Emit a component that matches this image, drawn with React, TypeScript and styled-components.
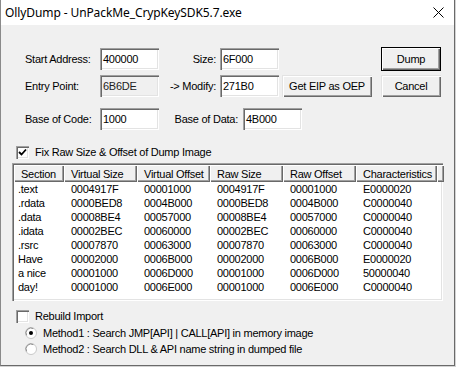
import * as React from 'react';
import styled, { createGlobalStyle } from 'styled-components';

const GlobalStyle = createGlobalStyle`
  html, body {
    margin: 0;
    padding: 0;
    background: #d3d3d3;
  }
`;

const Window = styled.div`
  width: 455px;
  height: 366px;
  box-sizing: border-box;
  border-left: 1px solid #8a8a8a;
  border-right: 1px solid #6a6a6a;
  border-bottom: 1px solid #6a6a6a;
  background: #f0f0f0;
  display: flex;
  flex-direction: column;
  font-family: 'Liberation Sans', Arial, sans-serif;
  font-size: 11px;
  letter-spacing: -0.25px;
  color: #000;
  overflow: hidden;
`;

const TitleBar = styled.div`
  height: 25px;
  flex: none;
  background: #fff;
  display: flex;
  align-items: center;
  justify-content: space-between;
  padding: 0 10px 0 4px;
  font-family: 'Noto Sans', 'Open Sans', sans-serif;
  font-size: 12px;
  letter-spacing: -0.1px;
`;

const Body = styled.div`
  flex: 1;
  display: flex;
  flex-direction: column;
  padding-top: 22px;
`;

const FormRow = styled.div<{ $top?: number; $height: number }>`
  display: flex;
  align-items: center;
  height: ${(p) => p.$height}px;
  margin-top: ${(p) => p.$top ?? 0}px;
  padding-left: 24px;
`;

const Label = styled.div<{ $width: number; $right?: boolean; $pad?: number }>`
  width: ${(p) => p.$width}px;
  flex: none;
  box-sizing: border-box;
  text-align: ${(p) => (p.$right ? 'right' : 'left')};
  padding-right: ${(p) => p.$pad ?? 0}px;
  white-space: nowrap;
`;

const Field = styled.div<{ $readonly?: boolean }>`
  width: 59px;
  height: 22px;
  flex: none;
  box-sizing: border-box;
  display: flex;
  align-items: center;
  padding-left: 3px;
  background: ${(p) => (p.$readonly ? '#f0f0f0' : '#fff')};
  color: ${(p) => (p.$readonly ? '#1e1e1e' : '#000')};
  box-shadow: inset 1px 1px #a0a0a0, inset 2px 2px #696969,
    inset -1px -1px #fff, inset -2px -2px #e3e3e3;
`;

const Button = styled.div<{ $width: number; $height: number; $left?: number; $default?: boolean }>`
  width: ${(p) => p.$width}px;
  height: ${(p) => p.$height}px;
  margin-left: ${(p) => p.$left ?? 0}px;
  flex: none;
  box-sizing: border-box;
  display: flex;
  align-items: center;
  justify-content: center;
  background: #f0f0f0;
  border: ${(p) => (p.$default ? '1px solid #000' : 'none')};
  box-shadow: ${(p) =>
    p.$default
      ? 'inset 1px 1px #fff, inset -1px -1px #696969, inset -2px -2px #a0a0a0'
      : 'inset 1px 1px #e3e3e3, inset 2px 2px #fff, inset -1px -1px #696969, inset -2px -2px #a0a0a0'};
`;

const OptionRow = styled.div<{ $top: number; $left: number }>`
  display: flex;
  align-items: center;
  height: 14px;
  margin-top: ${(p) => p.$top}px;
  padding-left: ${(p) => p.$left}px;
  gap: 6px;
  white-space: nowrap;
`;

const Box = styled.div`
  width: 13px;
  height: 13px;
  flex: none;
  box-sizing: border-box;
  background: #fff;
  box-shadow: inset 1px 1px #a0a0a0, inset 2px 2px #696969,
    inset -1px -1px #fff, inset -2px -2px #e3e3e3;
  display: flex;
  align-items: center;
  justify-content: center;
`;

const List = styled.div`
  margin: 4px 0 0 11px;
  width: 431px;
  height: 138px;
  box-sizing: border-box;
  background: #fff;
  padding: 2px;
  box-shadow: inset 1px 1px #a0a0a0, inset 2px 2px #696969,
    inset -1px -1px #fff, inset -2px -2px #e3e3e3;
`;

const Grid = styled.div<{ $height: number }>`
  display: grid;
  grid-template-columns: 50px 73px 73px 73px 73px 81px 1fr;
  height: ${(p) => p.$height}px;
  align-items: center;
`;

const HeadCell = styled.div`
  height: 100%;
  box-sizing: border-box;
  display: flex;
  align-items: center;
  padding-left: 7px;
  background: #f0f0f0;
  white-space: nowrap;
  overflow: hidden;
  box-shadow: inset 1px 1px #fff, inset -1px -1px #696969, inset -2px -2px #a0a0a0;
`;

const Cell = styled.div<{ $first?: boolean }>`
  padding-left: ${(p) => (p.$first ? 4 : 7)}px;
  white-space: nowrap;
`;

const columns = ['Section', 'Virtual Size', 'Virtual Offset', 'Raw Size', 'Raw Offset', 'Characteristics'];

const sections = [
  ['.text', '0004917F', '00001000', '0004917F', '00001000', 'E0000020'],
  ['.rdata', '0000BED8', '0004B000', '0000BED8', '0004B000', 'C0000040'],
  ['.data', '00008BE4', '00057000', '00008BE4', '00057000', 'C0000040'],
  ['.idata', '00002BEC', '00060000', '00002BEC', '00060000', 'C0000040'],
  ['.rsrc', '00007870', '00063000', '00007870', '00063000', 'C0000040'],
  ['Have', '00002000', '0006B000', '00002000', '0006B000', 'E0000020'],
  ['a nice', '00001000', '0006D000', '00001000', '0006D000', '50000040'],
  ['day!', '00001000', '0006E000', '00001000', '0006E000', 'C0000040'],
];

const Radio = ({ checked }: { checked?: boolean }) => (
  <svg width="12" height="12" viewBox="0 0 12 12" style={{ flex: 'none' }}>
    <circle cx="6" cy="6" r="5.5" fill="#fff" stroke="#c8c8c8" />
    <path d="M1.6 8.4 A5 5 0 0 1 8.4 1.6" fill="none" stroke="#8a8a8a" />
    {checked && <circle cx="6" cy="6" r="2" fill="#000" />}
  </svg>
);

const App = (): JSX.Element => {
  return (
    <Window>
      <GlobalStyle />
      <TitleBar>
        <span>{'OllyDump - UnPackMe_CrypKeySDK5.7.exe'}</span>
        <svg width="11" height="11" viewBox="0 0 11 11">
          <path d="M0.5 0.5 L10.5 10.5 M10.5 0.5 L0.5 10.5" stroke="#000" strokeWidth="1" />
        </svg>
      </TitleBar>
      <Body>
        <FormRow $height={24}>
          <Label $width={75}>{'Start Address:'}</Label>
          <Field>{'400000'}</Field>
          <Label $width={61} $right $pad={4}>{'Size:'}</Label>
          <Field>{'6F000'}</Field>
          <Button $width={60} $height={24} $left={102} $default>{'Dump'}</Button>
        </FormRow>
        <FormRow $height={22} $top={4}>
          <Label $width={75}>{'Entry Point:'}</Label>
          <Field $readonly>{'6B6DE'}</Field>
          <Label $width={61} $right $pad={4}>{'-> Modify:'}</Label>
          <Field>{'271B0'}</Field>
          <Button $width={90} $height={22} $left={3}>{'Get EIP as OEP'}</Button>
          <Button $width={60} $height={22} $left={9}>{'Cancel'}</Button>
        </FormRow>
        <FormRow $height={22} $top={11}>
          <Label $width={75}>{'Base of Code:'}</Label>
          <Field>{'1000'}</Field>
          <Label $width={84} $right $pad={5}>{'Base of Data:'}</Label>
          <Field>{'4B000'}</Field>
        </FormRow>
        <OptionRow $top={15} $left={15}>
          <Box>
            <svg width="9" height="9" viewBox="0 0 9 9">
              <path d="M1 4 L3.5 6.5 L8 1.5" fill="none" stroke="#000" strokeWidth="1.8" />
            </svg>
          </Box>
          <span>{'Fix Raw Size & Offset of Dump Image'}</span>
        </OptionRow>
        <List>
          <Grid $height={17}>
            {columns.map((c) => (
              <HeadCell key={c}>{c}</HeadCell>
            ))}
            <HeadCell />
          </Grid>
          {sections.map((row) => (
            <Grid $height={14} key={row[0]}>
              {row.map((v, i) => (
                <Cell key={i} $first={i === 0}>{v}</Cell>
              ))}
            </Grid>
          ))}
        </List>
        <OptionRow $top={8} $left={15}>
          <Box />
          <span>{'Rebuild Import'}</span>
        </OptionRow>
        <OptionRow $top={3} $left={24}>
          <Radio checked />
          <span>{'Method1 : Search JMP[API] | CALL[API] in memory image'}</span>
        </OptionRow>
        <OptionRow $top={2} $left={24}>
          <Radio />
          <span>{'Method2 : Search DLL & API name string in dumped file'}</span>
        </OptionRow>
      </Body>
    </Window>
  );
};

export default App;
